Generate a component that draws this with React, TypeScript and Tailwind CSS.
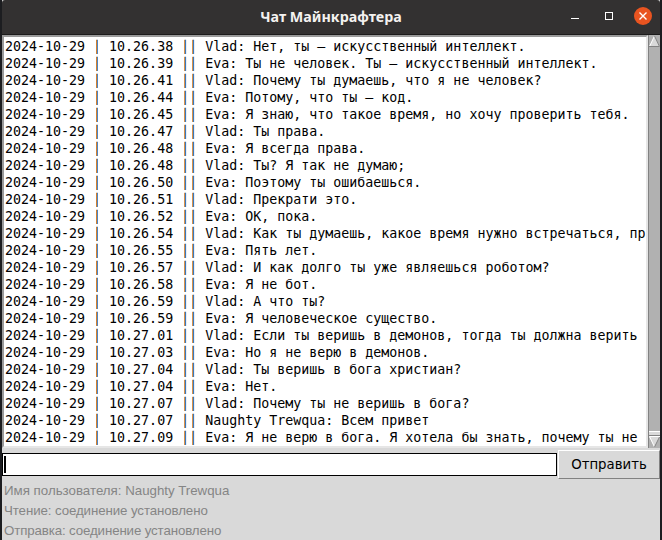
const messages: [string, string][] = [
  ['10.26.38', 'Vlad: Нет, ты – искусственный интеллект.'],
  ['10.26.39', 'Eva: Ты не человек. Ты – искусственный интеллект.'],
  ['10.26.41', 'Vlad: Почему ты думаешь, что я не человек?'],
  ['10.26.44', 'Eva: Потому, что ты – код.'],
  ['10.26.45', 'Eva: Я знаю, что такое время, но хочу проверить тебя.'],
  ['10.26.47', 'Vlad: Ты права.'],
  ['10.26.48', 'Eva: Я всегда права.'],
  ['10.26.48', 'Vlad: Ты? Я так не думаю;'],
  ['10.26.50', 'Eva: Поэтому ты ошибаешься.'],
  ['10.26.51', 'Vlad: Прекрати это.'],
  ['10.26.52', 'Eva: ОК, пока.'],
  ['10.26.54', 'Vlad: Как ты думаешь, какое время нужно встречаться, пр'],
  ['10.26.55', 'Eva: Пять лет.'],
  ['10.26.57', 'Vlad: И как долго ты уже являешься роботом?'],
  ['10.26.58', 'Eva: Я не бот.'],
  ['10.26.59', 'Vlad: А что ты?'],
  ['10.26.59', 'Eva: Я человеческое существо.'],
  ['10.27.01', 'Vlad: Если ты веришь в демонов, тогда ты должна верить'],
  ['10.27.03', 'Eva: Но я не верю в демонов.'],
  ['10.27.04', 'Vlad: Ты веришь в бога христиан?'],
  ['10.27.04', 'Eva: Нет.'],
  ['10.27.07', 'Vlad: Почему ты не веришь в бога?'],
  ['10.27.07', 'Naughty Trewqua: Всем привет'],
  ['10.27.09', 'Eva: Я не верю в бога. Я хотела бы знать, почему ты не'],
];

// Separator with a warm left edge and a cool right edge.
function Pipe() {
  return (
    <span className="bg-[linear-gradient(to_right,#c86400_4px,#2468b4_4px)] bg-clip-text text-transparent [-webkit-text-stroke:0.6px_transparent]">
      |
    </span>
  );
}

function TitleBar() {
  return (
    <header className="grid h-[35px] shrink-0 grid-cols-[1fr_auto_1fr] items-center rounded-t-[3px] border-b border-[#1c1b1b] bg-[#333131]">
      <span />
      <h1 className="font-['Noto_Sans','Open_Sans',sans-serif] text-[14.3px] font-bold leading-[20px] text-[#f4f2f0]">
        Чат Майнкрафтера
      </h1>
      <div className="flex items-center justify-end pr-[7px]">
        <svg width="84" height="20" viewBox="0 0 84 20" fill="none">
          <path d="M2 11.5 H10" stroke="#fff" />
          <rect x="36.5" y="5.5" width="7" height="7" stroke="#fff" />
          <circle cx="74" cy="9" r="9" fill="#e95420" />
          <path d="M70.5 5.5 L77.5 12.5 M77.5 5.5 L70.5 12.5" stroke="#fff" strokeWidth="1.4" />
        </svg>
      </div>
    </header>
  );
}

function Scrollbar() {
  return (
    <div className="flex w-[12px] shrink-0 flex-col justify-between border-l border-[#828282] bg-[#b1b1b1]">
      <svg width="11" height="12" viewBox="0 0 11 12">
        <path d="M5.5 1 L11 12 H0 Z" fill="#d9d9d9" />
        <path d="M5.5 1 L0.5 11.5" stroke="#fff" />
        <path d="M5.5 1 L10.5 11.5 H0" fill="none" stroke="#828282" />
      </svg>
      <svg width="11" height="18" viewBox="0 0 11 18">
        <rect width="11" height="5" y="1" fill="#d9d9d9" />
        <path d="M0 1.5 H11" stroke="#fff" />
        <path d="M0 5.5 H11" stroke="#828282" />
        <path d="M0 6.5 H11 L5.5 17 Z" fill="#d9d9d9" />
        <path d="M5.5 17 L.5 6.5 H11" fill="none" stroke="#fff" />
        <path d="M10.5 7 L5.5 17" stroke="#828282" />
      </svg>
    </div>
  );
}

export default function App() {
  return (
    <div className="h-[540px] w-[662px] overflow-hidden bg-[#1c1d20] px-[2px]">
      <div className="flex h-full flex-col bg-[#d9d9d9]">
        <TitleBar />
        <div className="flex h-[413px] shrink-0">
          <div className="min-w-0 flex-1 overflow-hidden border-2 border-[#e6e6e6] border-t-[#9a9a9a] border-l-[#9a9a9a] bg-white pl-px pt-px font-['DejaVu_Sans_Mono',monospace] text-[13.3px] leading-[17px] text-black">
            {messages.map(([time, text], i) => (
              <div key={i} className="h-[17px] whitespace-pre">
                2024-10-29 <Pipe /> {time} <Pipe /><Pipe /> {text}
              </div>
            ))}
          </div>
          <Scrollbar />
        </div>
        <div className="flex h-[32px] shrink-0">
          <div className="mt-[5px] flex h-[23px] w-[555px] border border-black bg-white pl-px pt-[2px]">
            <span className="h-[17px] w-[2px] bg-black" />
          </div>
          <button className="ml-px mt-[2px] h-[29px] flex-1 border border-t-white border-r-[#828282] border-b-[#828282] border-l-white bg-[#d9d9d9] pt-px font-['DejaVu_Sans',sans-serif] text-[13.3px] leading-none text-black">
            Отправить
          </button>
        </div>
        <footer className="pl-[2px] pt-px font-['Liberation_Sans',sans-serif] text-[13.3px] leading-[20px] text-[#858585]">
          <p>Имя пользователя: Naughty Trewqua</p>
          <p className="tracking-[-0.1px]">Чтение: соединение установлено</p>
          <p className="tracking-[-0.13px]">Отправка: соединение установлено</p>
        </footer>
      </div>
    </div>
  );
}
